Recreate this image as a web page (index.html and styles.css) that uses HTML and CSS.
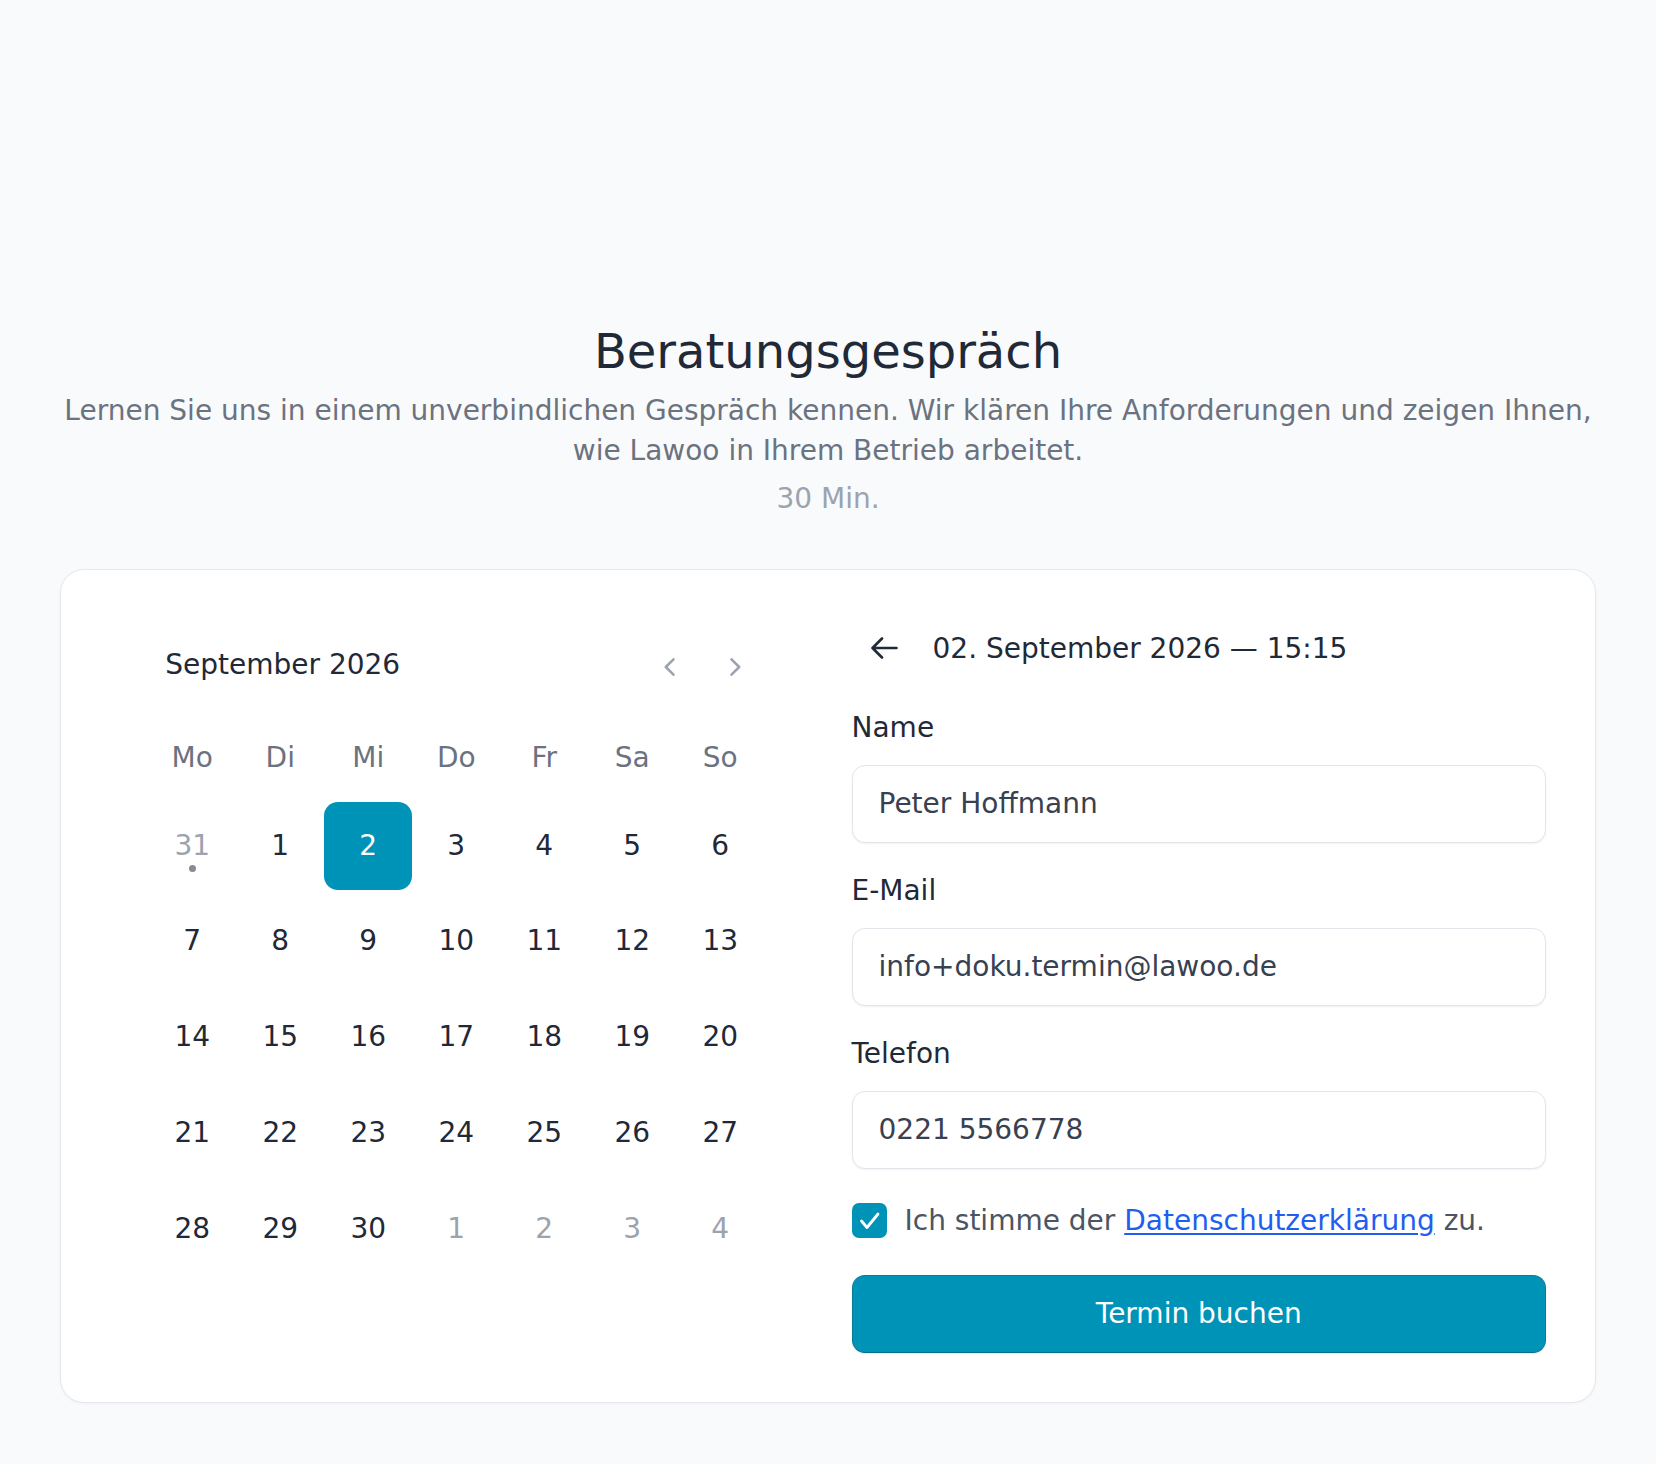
FILE: index.html
```html
<!DOCTYPE html>
<html lang="de">
<head>
<meta charset="utf-8">
<title>Beratungsgespräch</title>
<link rel="stylesheet" href="styles.css">
</head>
<body>
<main class="page">
  <header class="intro">
    <h1 class="title">Beratungsgespräch</h1>
    <p class="desc">Lernen Sie uns in einem unverbindlichen Gespräch kennen. Wir klären Ihre Anforderungen und zeigen Ihnen, wie Lawoo in Ihrem Betrieb arbeitet.</p>
    <p class="duration">30 Min.</p>
  </header>

  <section class="card">
    <div class="cal-col">
      <div class="calendar">
        <div class="cal-head">
          <span class="month">September 2026</span>
          <div class="nav">
            <button class="nav-btn" aria-label="Vorheriger Monat">
              <svg width="11" height="18" viewBox="0 0 11 18"><path d="M9.5 1.3 L1.8 9 L9.5 16.7" fill="none" stroke="#9ca3af" stroke-width="2.5" stroke-linecap="round" stroke-linejoin="round"/></svg>
            </button>
            <button class="nav-btn" aria-label="Nächster Monat">
              <svg width="11" height="18" viewBox="0 0 11 18"><path d="M1.5 1.3 L9.2 9 L1.5 16.7" fill="none" stroke="#9ca3af" stroke-width="2.5" stroke-linecap="round" stroke-linejoin="round"/></svg>
            </button>
          </div>
        </div>
        <div class="weekdays">
          <span>Mo</span><span>Di</span><span>Mi</span><span>Do</span><span>Fr</span><span>Sa</span><span>So</span>
        </div>
        <div class="days">
          <span class="day muted today">31<i class="dot"></i></span>
          <span class="day">1</span>
          <span class="day selected">2</span>
          <span class="day">3</span>
          <span class="day">4</span>
          <span class="day">5</span>
          <span class="day">6</span>
          <span class="day">7</span>
          <span class="day">8</span>
          <span class="day">9</span>
          <span class="day">10</span>
          <span class="day">11</span>
          <span class="day">12</span>
          <span class="day">13</span>
          <span class="day">14</span>
          <span class="day">15</span>
          <span class="day">16</span>
          <span class="day">17</span>
          <span class="day">18</span>
          <span class="day">19</span>
          <span class="day">20</span>
          <span class="day">21</span>
          <span class="day">22</span>
          <span class="day">23</span>
          <span class="day">24</span>
          <span class="day">25</span>
          <span class="day">26</span>
          <span class="day">27</span>
          <span class="day">28</span>
          <span class="day">29</span>
          <span class="day">30</span>
          <span class="day muted">1</span>
          <span class="day muted">2</span>
          <span class="day muted">3</span>
          <span class="day muted">4</span>
        </div>
      </div>
    </div>

    <form class="form-col">
      <div class="form-head">
        <button type="button" class="back-btn" aria-label="Zurück">
          <svg width="28" height="22" viewBox="0 0 28 22"><path d="M2.5 11 H26.5 M12 1.5 L2.5 11 L12 20.5" fill="none" stroke="#1f2937" stroke-width="2.6" stroke-linecap="round" stroke-linejoin="round"/></svg>
        </button>
        <span class="slot">02. September 2026 — 15:15</span>
      </div>

      <div class="field">
        <label class="label">Name</label>
        <div class="input">Peter Hoffmann</div>
      </div>
      <div class="field">
        <label class="label">E-Mail</label>
        <div class="input">info+doku.termin@lawoo.de</div>
      </div>
      <div class="field">
        <label class="label">Telefon</label>
        <div class="input">0221 5566778</div>
      </div>

      <div class="consent">
        <span class="checkbox">
          <svg width="35" height="35" viewBox="0 0 35 35"><path d="M9.5 18 L15 24.5 L26 11" fill="none" stroke="#ffffff" stroke-width="2.8" stroke-linecap="round" stroke-linejoin="round"/></svg>
        </span>
        <span class="consent-text">Ich stimme der <a href="#" class="link">Datenschutzerklärung</a> zu.</span>
      </div>

      <button type="button" class="submit">Termin buchen</button>
    </form>
  </section>
</main>
</body>
</html>
```

FILE: styles.css
```css
* {
  box-sizing: border-box;
}

html, body {
  margin: 0;
  padding: 0;
  background: #f9fafb;
}

body {
  font-family: "DejaVu Sans", "Noto Sans", sans-serif;
  color: #1f2937;
}

.page {
  width: 1536px;
  margin: 0 auto;
  padding-top: 322px;
  padding-bottom: 40px;
}

.intro {
  display: flex;
  flex-direction: column;
  align-items: center;
  text-align: center;
}

.title {
  margin: 0;
  font-size: 48px;
  line-height: 58px;
  font-weight: 400;
  color: #1f2937;
}

.desc {
  margin: 11px -12px 0;
  font-size: 28px;
  line-height: 40px;
  color: #6b7280;
  max-width: 1560px;
}

.duration {
  margin: 8px 0 0;
  font-size: 28px;
  line-height: 40px;
  color: #9ca3af;
}

.card {
  margin-top: 50px;
  background: #ffffff;
  border: 1px solid #e5e7eb;
  border-radius: 24px;
  padding: 48px 49px 49px 48px;
  display: grid;
  grid-template-columns: 1fr 1fr;
  column-gap: 48px;
  box-shadow: 0 1px 3px rgba(17, 24, 39, 0.04);
}

/* Calendar */
.cal-col {
  display: flex;
  justify-content: center;
}

.calendar {
  width: 616px;
  padding-top: 19px;
}

.cal-head {
  height: 54px;
  display: flex;
  align-items: center;
  justify-content: space-between;
  padding-left: 17px;
  padding-right: 11px;
}

.month {
  font-size: 28px;
  color: #1f2937;
}

.nav {
  display: flex;
  gap: 30px;
  padding-top: 6px;
}

.nav-btn {
  width: 36px;
  height: 36px;
  border: 0;
  background: transparent;
  padding: 0;
  display: flex;
  align-items: center;
  justify-content: center;
}

.weekdays {
  margin-top: 42px;
  height: 48px;
  display: grid;
  grid-template-columns: repeat(7, 88px);
  align-items: center;
  justify-items: center;
  font-size: 28px;
  color: #6b7280;
}

.days {
  margin-top: 21px;
  display: grid;
  grid-template-columns: repeat(7, 88px);
  grid-auto-rows: 88px;
  row-gap: 7.8px;
}

.day {
  position: relative;
  display: flex;
  align-items: center;
  justify-content: center;
  padding-bottom: 2px;
  font-size: 28px;
  color: #1f2937;
  border-radius: 14px;
}

.day.muted {
  color: #9ca3af;
}

.day.selected {
  background: #0093b8;
  color: #ffffff;
}

.dot {
  position: absolute;
  left: 50%;
  top: 63px;
  width: 7px;
  height: 7px;
  margin-left: -3.5px;
  border-radius: 50%;
  background: #868b94;
}

/* Form */
.form-col {
  display: flex;
  flex-direction: column;
}

.form-head {
  height: 60px;
  display: flex;
  align-items: center;
}

.back-btn {
  width: 64px;
  height: 60px;
  border: 0;
  background: transparent;
  padding: 0;
  display: flex;
  align-items: center;
  justify-content: center;
}

.slot {
  margin-left: 17px;
  font-size: 28px;
  color: #1f2937;
}

.field {
  display: flex;
  flex-direction: column;
  gap: 16px;
  margin-bottom: 27px;
}

.form-head + .field {
  margin-top: 29px;
}

.label {
  font-size: 28px;
  line-height: 42px;
  color: #1f2937;
}

.input {
  height: 78px;
  border: 1px solid #e2e5ea;
  border-radius: 13px;
  padding: 0 26px 2px;
  display: flex;
  align-items: center;
  font-size: 28px;
  color: #374151;
  background: #ffffff;
  box-shadow: 0 1px 2px rgba(17, 24, 39, 0.06);
}

.consent {
  margin-top: 3px;
  height: 42px;
  display: flex;
  align-items: center;
  gap: 18px;
}

.checkbox {
  width: 35px;
  height: 35px;
  border-radius: 7px;
  background: #0093b8;
  display: flex;
  flex-shrink: 0;
}

.consent-text {
  font-size: 28px;
  color: #4b5563;
}

.link {
  color: #1f5ef0;
  text-decoration: underline;
  text-underline-offset: 3px;
}

.submit {
  margin-top: 34px;
  height: 78px;
  padding-bottom: 2px;
  border: 1px solid #087c99;
  border-bottom-color: #06708b;
  border-radius: 13px;
  background: #0093b8;
  color: #ffffff;
  font-family: "DejaVu Sans", "Noto Sans", sans-serif;
  font-size: 28px;
  box-shadow: 0 1px 2px rgba(17, 24, 39, 0.1);
}
```
